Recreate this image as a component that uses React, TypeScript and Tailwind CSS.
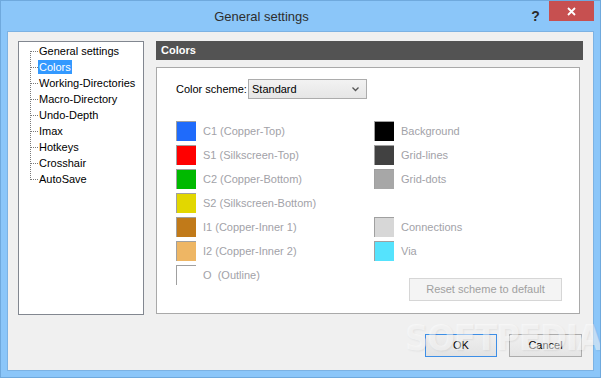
import React from "react";

const TREE = [
  "General settings",
  "Colors",
  "Working-Directories",
  "Macro-Directory",
  "Undo-Depth",
  "Imax",
  "Hotkeys",
  "Crosshair",
  "AutoSave",
];

const LEFT_COLORS: { label: string; color: string }[] = [
  { label: "C1 (Copper-Top)", color: "#1f6bfb" },
  { label: "S1 (Silkscreen-Top)", color: "#ff0000" },
  { label: "C2 (Copper-Bottom)", color: "#00b900" },
  { label: "S2 (Silkscreen-Bottom)", color: "#e2d700" },
  { label: "I1 (Copper-Inner 1)", color: "#c17a19" },
  { label: "I2 (Copper-Inner 2)", color: "#eeb664" },
  { label: "O  (Outline)", color: "#ffffff" },
];

const RIGHT_COLORS: ({ label: string; color: string } | null)[] = [
  { label: "Background", color: "#000000" },
  { label: "Grid-lines", color: "#414141" },
  { label: "Grid-dots", color: "#a7a7a7" },
  null,
  { label: "Connections", color: "#d7d7d7" },
  { label: "Via", color: "#55e3fd" },
];

function Connector({ first, last }: { first: boolean; last: boolean }) {
  return (
    <svg width="8" height="16" className="shrink-0">
      <line
        x1="0.5"
        y1={first ? 8 : 0}
        x2="0.5"
        y2={last ? 9 : 16}
        stroke="#7a7a7a"
        strokeDasharray="1 1"
      />
      <line x1="1" y1="8.5" x2="8" y2="8.5" stroke="#7a7a7a" strokeDasharray="1 1" />
    </svg>
  );
}

function Swatch({ label, color }: { label: string; color: string }) {
  return (
    <div className="flex items-center h-[20px] gap-[7px]">
      <div
        className="w-[20px] h-[20px] border-t border-l border-t-[#a0a0a0] border-l-[#a0a0a0]"
        style={{ backgroundColor: color }}
      />
      <span className="text-[11px] text-[#a2a2a8] leading-none whitespace-pre">{label}</span>
    </div>
  );
}

export default function App() {
  return (
    <div
      className="w-[601px] h-[378px] bg-[#8bc6f9] border border-[#6fa9dd] flex flex-col relative overflow-hidden"
      style={{ fontFamily: '"Liberation Sans", Arial, sans-serif' }}
    >
      {/* Title bar */}
      <div className="h-[30px] flex items-start shrink-0">
        <div className="flex-1 flex justify-center pt-[6px] text-[13px] text-[#2e2e2e]">General settings</div>
        <div className="w-[27px] flex justify-center pt-[5px] text-[14px] font-bold text-[#2b2b2b]">?</div>
        <div className="w-[45px] h-[20px] bg-[#c75050] flex items-center justify-center">
          <svg width="9" height="9" viewBox="0 0 9 9">
            <path d="M1 1 L8 8 M8 1 L1 8" stroke="#fff" strokeWidth="1.8" />
          </svg>
        </div>
        <div className="w-[6px]" />
      </div>

      {/* Client area */}
      <div className="mx-[6px] w-[587px] h-[340px] bg-[#f0f0f0] border border-[#7cb2e3] flex flex-col">
        <div className="flex items-start pl-[10px] pt-[9px]">
          {/* Tree */}
          <div className="w-[126px] h-[274px] bg-white border border-[#828790] pl-[11px] pt-[1px]">
            {TREE.map((item, i) => (
              <div key={item} className="flex items-center h-[16px]">
                <Connector first={i === 0} last={i === TREE.length - 1} />
                <span
                  className={
                    "text-[11px] leading-[14px] px-[1px] " +
                    (item === "Colors" ? "bg-[#3399ff] text-white" : "text-black")
                  }
                >
                  {item}
                </span>
              </div>
            ))}
          </div>

          {/* Right side */}
          <div className="ml-[12px] w-[427px] flex flex-col">
            <div className="h-[19px] bg-[#535353] flex items-center pl-[5px] text-[11px] font-bold text-white">
              Colors
            </div>
            <div className="mt-[7px] w-[424px] h-[247px] bg-white border border-[#a9a9a9] pl-[19px] pt-[11px]">
              <div className="flex items-center">
                <span className="w-[72px] text-[11px] text-black">Color scheme:</span>
                <div className="w-[119px] h-[20px] border border-[#acacac] bg-gradient-to-b from-[#f2f2f2] to-[#e6e6e6] flex items-center justify-between pl-[3px] pr-[7px]">
                  <span className="text-[11px] text-black">Standard</span>
                  <svg width="7" height="5" viewBox="0 0 7 5">
                    <path d="M0.5 0.5 L3.5 3.5 L6.5 0.5" stroke="#555" strokeWidth="1.3" fill="none" />
                  </svg>
                </div>
              </div>

              <div className="flex mt-[22px]">
                <div className="w-[198px] flex flex-col gap-[4px]">
                  {LEFT_COLORS.map((c) => (
                    <Swatch key={c.label} label={c.label} color={c.color} />
                  ))}
                </div>
                <div className="flex flex-col gap-[4px]">
                  {RIGHT_COLORS.map((c, i) =>
                    c ? <Swatch key={c.label} label={c.label} color={c.color} /> : <div key={i} className="h-[20px]" />
                  )}
                  <div className="ml-[35px] mt-[13px] w-[153px] h-[23px] bg-[#f4f4f4] border border-[#d6d6d6] flex items-center justify-center text-[11px] text-[#a0a0a0]">
                    Reset scheme to default
                  </div>
                </div>
              </div>
            </div>
          </div>
        </div>

        {/* Buttons */}
        <div className="flex justify-end gap-[12px] pr-[11px] mt-[19px]">
          <div className="w-[72px] h-[23px] border border-[#3d8ee6] bg-gradient-to-b from-[#eeeeee] to-[#e3e3e3] flex items-center justify-center text-[11px] text-black">
            OK
          </div>
          <div className="w-[73px] h-[23px] border border-[#acacac] bg-gradient-to-b from-[#f0f0f0] to-[#e5e5e5] flex items-center justify-center text-[11px] text-black">
            Cancel
          </div>
        </div>
      </div>

      {/* Watermark */}
      <div
        className="absolute left-[404px] top-[310px] text-[36px] font-bold text-white/50 tracking-[-1px] pointer-events-none"
        style={{ fontFamily: '"DejaVu Sans Condensed", "Liberation Sans", sans-serif', textShadow: "1px 1px 2px rgba(0,0,0,0.06)" }}
      >
        SOFTPEDIA
      </div>
    </div>
  );
}
